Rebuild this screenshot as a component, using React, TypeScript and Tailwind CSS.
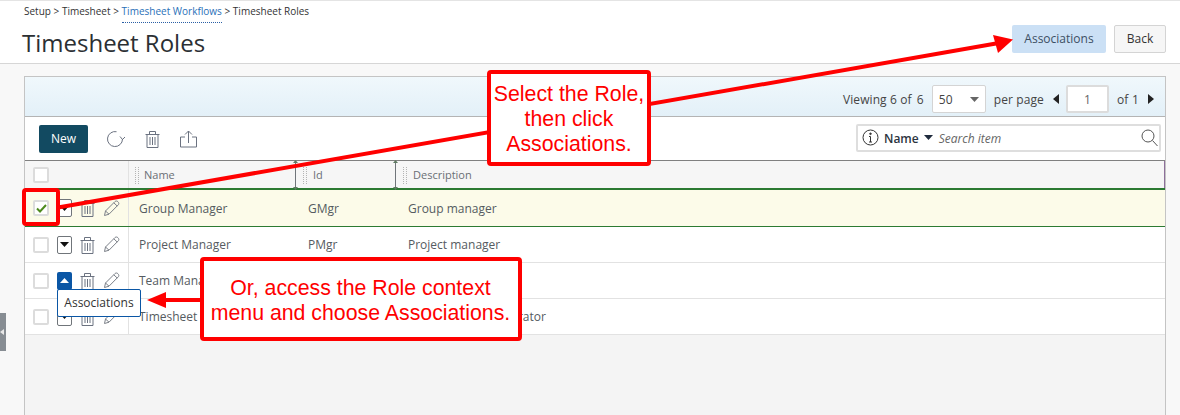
import React from "react";

const ui = { fontFamily: '"Open Sans", sans-serif' };

function Trash({ className = "" }: { className?: string }) {
  return (
    <svg width="15" height="18" viewBox="0 0 15 18" fill="none" stroke="#6b7280" strokeWidth="1" className={className}>
      <path d="M0.5 4.5H14.5M4.5 4.5V1.5H10.5V4.5M2 4.5V17.5H13V4.5M5 7V15M7.5 7V15M10 7V15" />
    </svg>
  );
}

function Pencil() {
  return (
    <svg width="17" height="17" viewBox="0 0 17 17" fill="none" stroke="#7b8088" strokeWidth="1">
      <path d="M1.5 15.5L2.5 11L12 1.5C13 0.8 14 0.8 15 1.8C16 2.8 16 3.8 15.5 4.6L6 14.2L1.5 15.5ZM2.5 11L6 14.2M10.8 2.8L14.2 6" />
    </svg>
  );
}

function Box({ checked = false }: { checked?: boolean }) {
  return (
    <div className="w-[16px] h-[16px] border-2 border-[#dcdcdc] rounded-[2px] bg-white flex items-center justify-center">
      {checked && (
        <svg width="11" height="9" viewBox="0 0 11 9" fill="none" stroke="#4d8a1e" strokeWidth="2">
          <path d="M1 4.5L4 7.5L10 1" />
        </svg>
      )}
    </div>
  );
}

function Caret({ up = false, color = "#111" }: { up?: boolean; color?: string }) {
  return (
    <svg width="9" height="5" viewBox="0 0 9 5" fill={color}>
      <path d={up ? "M4.5 0L9 5H0Z" : "M0 0H9L4.5 5Z"} />
    </svg>
  );
}

function Grip() {
  return <div className="w-[4px] h-[17px] border-x border-dotted border-[#b4b4b4]" />;
}

function Sep() {
  return (
    <svg width="7" height="30" viewBox="0 0 7 30" className="absolute -top-[1px] -right-[3px]">
      <path d="M3.5 1V29" stroke="#70757a" strokeWidth="1" />
      <path d="M1 3L3.5 0L6 3ZM1 27L3.5 30L6 27Z" fill="#5f7a62" />
    </svg>
  );
}

function Row({ name, id, desc, selected = false, open = false }: { name: string; id: string; desc: string; selected?: boolean; open?: boolean }) {
  return (
    <div
      className={`grid grid-cols-[104px_167px_100px_1fr] text-[12px] text-[#555b61] ${
        selected ? "bg-[#fcfbe9] border-b border-[#2c7a32] h-[37px]" : "bg-white border-b border-[#e2e2e2] h-[36px]"
      }`}
    >
      <div className="flex items-center pl-[8px] border-r border-[#e2e2e2]">
        <Box checked={selected} />
        <div
          className={`ml-[8px] w-[15px] h-[18px] rounded-[2px] flex items-center justify-center ${
            open ? "bg-[#0a56a5]" : "bg-white border border-[#70757a]"
          }`}
        >
          <Caret up={open} color={open ? "#fff" : "#111"} />
        </div>
        <Trash className="ml-[8px]" />
        <div className="ml-[8px]">
          <Pencil />
        </div>
      </div>
      <div className={`flex items-center pl-[10px] ${selected ? "pt-[1px]" : ""}`}>{name}</div>
      <div className={`flex items-center pl-[12px] ${selected ? "pt-[1px]" : ""}`}>{id}</div>
      <div className={`flex items-center pl-[12px] ${selected ? "pt-[1px]" : ""}`}>{desc}</div>
    </div>
  );
}

export default function App() {
  return (
    <div className="relative w-[1180px] h-[415px] overflow-hidden bg-[#f8f8f8] flex flex-col" style={ui}>
      <header className="h-[64px] shrink-0 bg-white border-t-[1px] border-t-[#e4e4e4] border-b border-b-[#d6d6d6] pl-[24px] pr-[14px] flex justify-between">
        <div>
          <div className="text-[10px] h-[22px] pt-[2px] text-[#333] flex gap-[2.67px] leading-[16px]">
            <span>Setup</span><span>&gt;</span><span>Timesheet</span><span>&gt;</span>
            <span className="text-[#2a70b8] border-b border-dotted border-[#2a5fa5] h-[20px]">Timesheet Workflows</span>
            <span>&gt;</span><span>Timesheet Roles</span>
          </div>
          <h1 className="-ml-[2px] mt-[4px] text-[24px] leading-[32px] text-[#2b2f33]">Timesheet Roles</h1>
        </div>
        <div className="flex gap-[8px] pt-[24px] text-[12px]">
          <button className="w-[94px] h-[28px] rounded-[2px] bg-[#cbe0f5] text-[#3d4f63]">Associations</button>
          <button className="w-[52px] h-[28px] rounded-[2px] bg-[#f6f6f6] border border-[#d4d4d4] text-[#333]">Back</button>
        </div>
      </header>

      <div className="relative flex-1 pt-[12px] pl-[24px] pr-[14px]">
        <div className="absolute left-0 top-[249px] w-[6px] h-[38px] bg-[#878d93] flex items-center">
          <svg width="4" height="6" viewBox="0 0 4 6" fill="#e8e8e8"><path d="M4 0V6L0 3Z" /></svg>
        </div>
        <main className="h-[400px] border border-[#c4c4c4] bg-[#f4f4f4]">
          <div className="h-[40px] pt-[8px] bg-gradient-to-b from-[#f0f8fc] to-[#e3f0f8] border-b border-[#b4b4b4] flex justify-end pr-[11px] text-[12px] text-[#444]">
            <div className="h-[28px] flex items-center">
              <span className="pt-[1px] tracking-[0.1px]">Viewing <b className="font-medium">6</b> of <b className="font-medium ml-[2px]">6</b></span>
              <div className="ml-[8px] w-[54px] h-[28px] bg-white border border-[#d4d4d4] rounded-[2px] flex items-center justify-between px-[6px] pt-[1px]">
                <span>50</span>
                <Caret color="#666" />
              </div>
              <span className="ml-[8px] pt-[1px] tracking-[0.1px]">per page</span>
              <svg width="6" height="10" viewBox="0 0 6 10" fill="#222" className="ml-[9px]"><path d="M6 0V10L0 5Z" /></svg>
              <div className="ml-[7px] w-[43px] h-[28px] pt-[1px] bg-white border-2 border-[#dcdcdc] rounded-[2px] flex items-center justify-center text-[#666]">1</div>
              <span className="ml-[8px] pt-[1px] tracking-[0.2px]">of 1</span>
              <svg width="6" height="10" viewBox="0 0 6 10" fill="#222" className="ml-[9px]"><path d="M0 0V10L6 5Z" /></svg>
            </div>
          </div>

          <div className="h-[43px] bg-white flex items-center pl-[14px] pr-[4px]">
            <button className="w-[49px] h-[28px] pt-[1px] rounded-[2px] bg-[#124a61] text-white text-[12px] font-medium">New</button>
            <svg width="19" height="18" viewBox="0 0 19 18" fill="none" stroke="#6b7280" strokeWidth="1" className="ml-[18px]">
              <path d="M10.5 1.7A7.5 7.5 0 1 0 16.5 9M14 6.5L16.5 9.5L19 7" />
            </svg>
            <Trash className="ml-[20px]" />
            <svg width="17" height="18" viewBox="0 0 17 18" fill="none" stroke="#6b7280" strokeWidth="1" className="ml-[20px]">
              <path d="M5 7H0.5V17H16.5V7H12M8.5 13V1M5 4.5L8.5 1L12 4.5" />
            </svg>
            <div className="ml-auto mb-[2px] w-[305px] h-[28px] bg-white border-2 border-[#dedede] rounded-[2px] flex items-center pl-[4px] pr-[1px] text-[12px]">
              <svg width="17" height="17" viewBox="0 0 17 17" fill="none" stroke="#333" strokeWidth="1">
                <circle cx="8.5" cy="8.5" r="7.5" />
                <path d="M8.5 7.5V13M7 13H10M7 7.5H8.5" />
                <circle cx="8.5" cy="4.8" r="0.8" fill="#333" />
              </svg>
              <span className="ml-[5px] pt-[2px] font-semibold text-[#2b3440]">Name</span>
              <span className="ml-[5px]"><Caret color="#1f2b3d" /></span>
              <span className="ml-[6px] pt-[2px] italic text-[12px] text-[#666]">Search item</span>
              <svg width="17" height="18" viewBox="0 0 17 18" fill="none" stroke="#555" strokeWidth="1" className="ml-auto">
                <circle cx="7" cy="7" r="6" />
                <path d="M11.5 11.5L16.5 17" />
              </svg>
            </div>
          </div>

          <div className="grid grid-cols-[104px_167px_100px_1fr] h-[30px] bg-[#f6f6f6] border-t border-t-[#808080] border-b-2 border-b-[#2c7a32] text-[11px] text-[#6a6f75]">
            <div className="flex items-center pl-[8px] border-r border-[#e2e2e2]"><Box /></div>
            <div className="relative flex items-center pl-[6px] pt-[1px]"><Grip /><span className="ml-[5px]">Name</span><Sep /></div>
            <div className="relative flex items-center pl-[7px] pt-[1px]"><Grip /><span className="ml-[6px]">Id</span><Sep /></div>
            <div className="relative flex items-center pl-[7px] pt-[1px] border-r border-[#8d6f9a]"><Grip /><span className="ml-[6px]">Description</span></div>
          </div>

          <Row selected name="Group Manager" id="GMgr" desc="Group manager" />
          <Row name="Project Manager" id="PMgr" desc="Project manager" />
          <Row open name="Team Manager" id="TMgr" desc="Team manager" />
          <Row name="Timesheet Administrator" id="TAdm" desc="Timesheet administrator" />
        </main>
      </div>

      <div className="absolute left-[57px] top-[289px] w-[84px] h-[28px] bg-white border border-[#0a56a5] rounded-[2px] flex items-center justify-center text-[12px] text-[#333]">Associations</div>

      <svg width="1180" height="415" viewBox="0 0 1180 415" className="absolute inset-0 pointer-events-none">
        <path d="M58 207.5L996 43.5" stroke="#ff0000" strokeWidth="4" />
        <path d="M1013 39.5L993 35L998 53Z" fill="#ff0000" />
        <path d="M164 300H201" stroke="#ff0000" strokeWidth="4" />
        <path d="M147 300L166 292V308Z" fill="#ff0000" />
      </svg>

      <div className="absolute left-[22px] top-[188px] w-[38px] h-[38px] border-4 border-[#ff0000] rounded-[4px]" />

      <div
        className="absolute left-[487px] top-[70px] w-[164px] h-[96px] pt-[2px] bg-white border-4 border-[#ff0000] rounded-[4px] flex items-center justify-center text-center text-[21.3px] leading-[25px] whitespace-nowrap text-[#ff0000]"
        style={{ fontFamily: '"Liberation Sans", sans-serif' }}
      >
        <div>Select the Role,<br />then click<br />Associations.</div>
      </div>
      <div
        className="absolute left-[200px] top-[257px] w-[322px] h-[84px] pt-[3px] pr-[1px] bg-white border-4 border-[#ff0000] rounded-[4px] flex items-center justify-center text-center text-[21.3px] leading-[25px] whitespace-nowrap text-[#ff0000]"
        style={{ fontFamily: '"Liberation Sans", sans-serif' }}
      >
        <div>Or, access the Role context<br />menu and choose Associations.</div>
      </div>
    </div>
  );
}
